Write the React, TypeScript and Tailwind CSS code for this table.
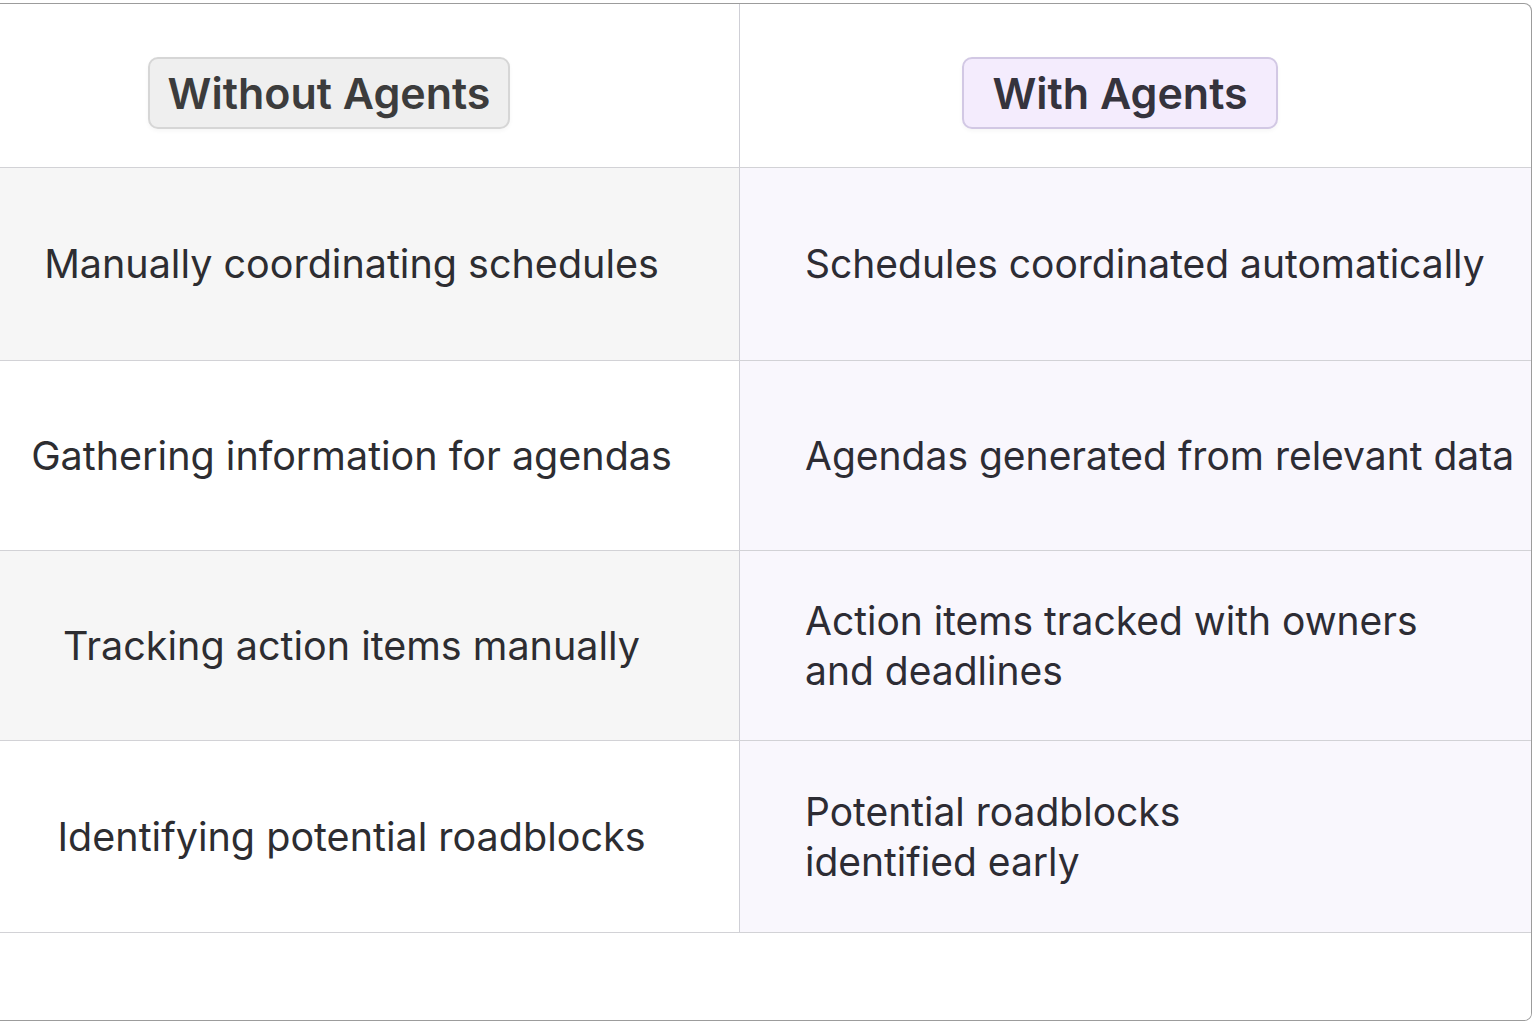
import React from "react";

const rows: { left: string; right: React.ReactNode; h: string; leftBg: string }[] = [
  { left: "Manually coordinating schedules", right: "Schedules coordinated automatically", h: "h-[193px]", leftBg: "bg-[#f6f6f6]" },
  { left: "Gathering information for agendas", right: "Agendas generated from relevant data", h: "h-[190px]", leftBg: "bg-white" },
  {
    left: "Tracking action items manually",
    right: (
      <>
        Action items tracked with owners
        <br />
        and deadlines
      </>
    ),
    h: "h-[190px]",
    leftBg: "bg-[#f6f6f6]",
  },
  {
    left: "Identifying potential roadblocks",
    right: (
      <>
        Potential roadblocks
        <br />
        identified early
      </>
    ),
    h: "h-[192px]",
    leftBg: "bg-white",
  },
];

export default function App() {
  return (
    <div
      className="w-[1536px] h-[1024px] bg-white pt-[3px]"
      style={{ fontFamily: "Inter, 'Noto Sans', sans-serif" }}
    >
      <div className="w-[1532px] h-[1018px] border-t border-r border-b border-[#9c9c9c] rounded-r-[8px] flex flex-col overflow-hidden">
        <div className="flex h-[164px] border-b border-[#d2d2d6]">
          <div className="w-[740px] border-r border-[#cfcfd6] flex items-start pl-[148px] pt-[53px]">
            <div className="h-[72px] w-[362px] rounded-[10px] border-2 border-[#d6d6d6] bg-[#efefef] flex items-center justify-center text-[43px] font-semibold text-[#3c3c3c] shadow-[0_2px_4px_rgba(0,0,0,0.04)]">
              Without Agents
            </div>
          </div>
          <div className="flex-1 flex items-start pl-[222px] pt-[53px]">
            <div className="h-[72px] w-[316px] rounded-[10px] border-2 border-[#d2c8e4] bg-[#f4ecfd] flex items-center justify-center text-[43px] font-semibold text-[#35333d] shadow-[0_2px_4px_rgba(0,0,0,0.04)]">
              With Agents
            </div>
          </div>
        </div>
        {rows.map((r, i) => (
          <div key={i} className={`flex ${r.h} border-b border-[#d2d2d6]`}>
            <div
              className={`w-[740px] border-r border-[#cfcfd6] ${r.leftBg} flex items-center justify-center pr-[36px] text-[39.5px] text-[#2d2d31] leading-[50px]`}
            >
              {r.left}
            </div>
            <div className="flex-1 bg-[#f9f7fd] flex items-center pl-[65px] text-[39px] text-[#2d2c34] leading-[50px]">
              <div>{r.right}</div>
            </div>
          </div>
        ))}
        <div className="flex-1 bg-white" />
      </div>
    </div>
  );
}
